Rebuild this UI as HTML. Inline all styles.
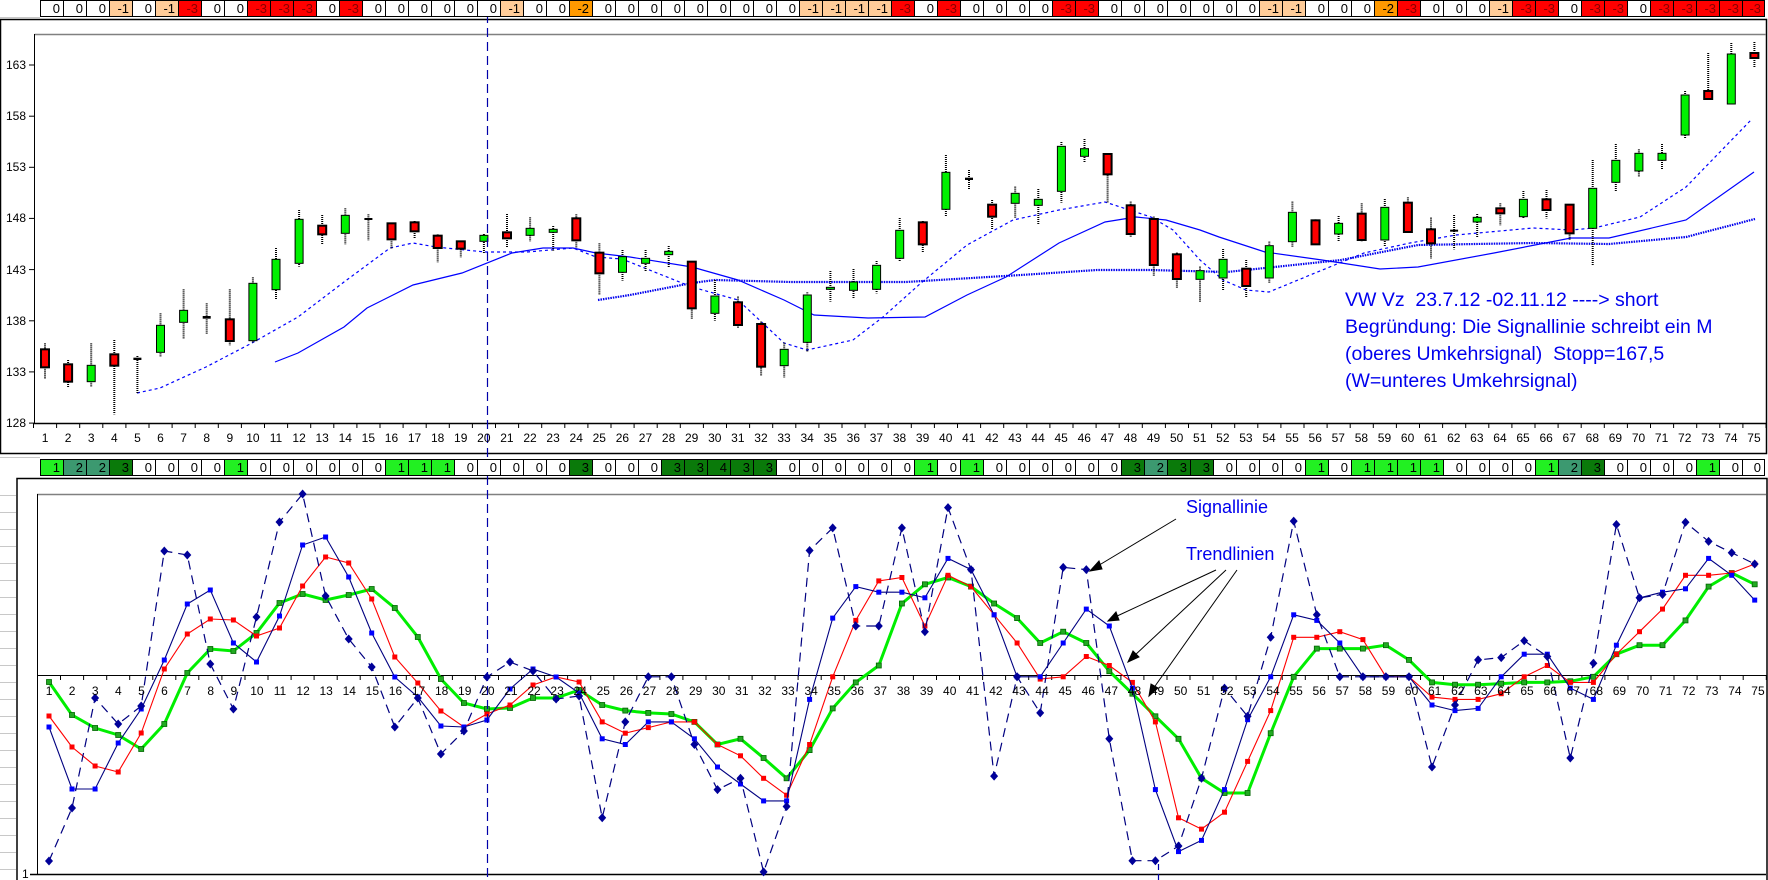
<!DOCTYPE html>
<html><head><meta charset="utf-8">
<style>
html,body{margin:0;padding:0;background:#fff;}
#wrap{position:relative;width:1768px;height:880px;overflow:hidden;background:#fff;font-family:"Liberation Sans",Arial,sans-serif;}
svg{position:absolute;left:0;top:0;}
.strip{position:absolute;left:40px;display:flex;height:17px;border-top:1px solid #000;border-bottom:1px solid #000;box-sizing:border-box;}
.strip i{font-style:normal;display:block;width:23px;height:100%;box-sizing:border-box;border-left:1px solid #000;font-size:13px;line-height:15px;text-align:right;padding-right:3px;color:#000;}
.strip i:last-child{border-right:1px solid #000;}
.a{background:#fff}.b{background:#FFCC99}.c{background:#FF9900}.d{background:#FF0000;color:#8a0000!important}
.e{background:#22F022}.f{background:#3C9970}.g{background:#0A7A0A}.h{background:#0A7A0A}
.lab{position:absolute;display:flex;font-size:12px;color:#000;}
.lab span{display:block;width:23.1px;text-align:center;}
.yl{position:absolute;font-size:12px;width:26px;text-align:right;left:0;}
.ann{position:absolute;color:#0000EE;font-size:19.5px;white-space:pre;line-height:27px;}
</style></head><body>
<div id="wrap">
<svg id="sv" width="1768" height="880" viewBox="0 0 1768 880" xmlns="http://www.w3.org/2000/svg">
<!-- spreadsheet grid bits -->
<g stroke="#c8c8c8" stroke-width="1">
<line x1="0" y1="17.5" x2="40" y2="17.5"/>
<line x1="0" y1="457.5" x2="40" y2="457.5"/>
<line x1="0" y1="495.5" x2="16" y2="495.5"/><line x1="0" y1="512.5" x2="16" y2="512.5"/><line x1="0" y1="529.5" x2="16" y2="529.5"/><line x1="0" y1="546.5" x2="16" y2="546.5"/><line x1="0" y1="563.5" x2="16" y2="563.5"/><line x1="0" y1="580.5" x2="16" y2="580.5"/><line x1="0" y1="597.5" x2="16" y2="597.5"/><line x1="0" y1="614.5" x2="16" y2="614.5"/><line x1="0" y1="631.5" x2="16" y2="631.5"/><line x1="0" y1="648.5" x2="16" y2="648.5"/><line x1="0" y1="665.5" x2="16" y2="665.5"/><line x1="0" y1="682.5" x2="16" y2="682.5"/><line x1="0" y1="699.5" x2="16" y2="699.5"/><line x1="0" y1="716.5" x2="16" y2="716.5"/><line x1="0" y1="733.5" x2="16" y2="733.5"/><line x1="0" y1="750.5" x2="16" y2="750.5"/><line x1="0" y1="767.5" x2="16" y2="767.5"/><line x1="0" y1="784.5" x2="16" y2="784.5"/><line x1="0" y1="801.5" x2="16" y2="801.5"/><line x1="0" y1="818.5" x2="16" y2="818.5"/><line x1="0" y1="835.5" x2="16" y2="835.5"/><line x1="0" y1="852.5" x2="16" y2="852.5"/><line x1="0" y1="869.5" x2="16" y2="869.5"/>
</g>
<!-- upper panel frame -->
<rect x="0.5" y="19.5" width="1766" height="434" fill="#fff" stroke="#000" stroke-width="1.5"/>
<line x1="34.5" y1="34.5" x2="1766" y2="34.5" stroke="#808080" stroke-width="1.5"/>
<line x1="34.5" y1="34" x2="34.5" y2="423" stroke="#000"/>
<line x1="34" y1="423.5" x2="1766" y2="423.5" stroke="#000" stroke-width="1.5"/>
<!-- lower panel frame -->
<rect x="17" y="478.5" width="1750" height="420" fill="#fff" stroke="#000" stroke-width="1.5"/>
<line x1="37" y1="494.5" x2="1766" y2="494.5" stroke="#808080" stroke-width="1.5"/>
<line x1="37.5" y1="494" x2="37.5" y2="874" stroke="#000"/>
<line x1="30" y1="874.5" x2="1766" y2="874.5" stroke="#000" stroke-width="1.5"/>
<line x1="37" y1="675.5" x2="1766" y2="675.5" stroke="#000" stroke-width="1"/>
<g id="gen"></g>
<!-- vertical dashed marker -->
<line x1="487.5" y1="0" x2="487.5" y2="880" stroke="#0000AA" stroke-width="1.2" stroke-dasharray="9,5"/>
<line x1="1158.5" y1="864" x2="1158.5" y2="880" stroke="#0000AA" stroke-width="1.2" stroke-dasharray="6,4"/>
<!-- annotation arrows -->
<g stroke="#000" stroke-width="1" fill="#000">
<line x1="1176" y1="519" x2="1096" y2="567"/><polygon points="1090,571 1099,561 1102,569"/>
<line x1="1216" y1="570" x2="1115" y2="617"/><polygon points="1108,621 1116,612 1119,620"/>
<line x1="1226" y1="570" x2="1134" y2="656"/><polygon points="1128,662 1133,651 1139,657"/>
<line x1="1237" y1="570" x2="1153" y2="689"/><polygon points="1149,696 1151,684 1158,688"/>
</g>
</svg>

<!-- top strip -->
<div class="strip" style="top:0">
<i class="a">0</i><i class="a">0</i><i class="a">0</i><i class="b">-1</i><i class="a">0</i><i class="b">-1</i><i class="d">-3</i><i class="a">0</i><i class="a">0</i><i class="d">-3</i><i class="d">-3</i><i class="d">-3</i><i class="a">0</i><i class="d">-3</i><i class="a">0</i><i class="a">0</i><i class="a">0</i><i class="a">0</i><i class="a">0</i><i class="a">0</i><i class="b">-1</i><i class="a">0</i><i class="a">0</i><i class="c">-2</i><i class="a">0</i><i class="a">0</i><i class="a">0</i><i class="a">0</i><i class="a">0</i><i class="a">0</i><i class="a">0</i><i class="a">0</i><i class="a">0</i><i class="b">-1</i><i class="b">-1</i><i class="b">-1</i><i class="b">-1</i><i class="d">-3</i><i class="a">0</i><i class="d">-3</i><i class="a">0</i><i class="a">0</i><i class="a">0</i><i class="a">0</i><i class="d">-3</i><i class="d">-3</i><i class="a">0</i><i class="a">0</i><i class="a">0</i><i class="a">0</i><i class="a">0</i><i class="a">0</i><i class="a">0</i><i class="b">-1</i><i class="b">-1</i><i class="a">0</i><i class="a">0</i><i class="a">0</i><i class="c">-2</i><i class="d">-3</i><i class="a">0</i><i class="a">0</i><i class="a">0</i><i class="b">-1</i><i class="d">-3</i><i class="d">-3</i><i class="a">0</i><i class="d">-3</i><i class="d">-3</i><i class="a">0</i><i class="d">-3</i><i class="d">-3</i><i class="d">-3</i><i class="d">-3</i><i class="d">-3</i>
</div>

<!-- lower strip -->
<div class="strip" style="top:459px">
<i class="e">1</i><i class="f">2</i><i class="f">2</i><i class="g">3</i><i class="a">0</i><i class="a">0</i><i class="a">0</i><i class="a">0</i><i class="e">1</i><i class="a">0</i><i class="a">0</i><i class="a">0</i><i class="a">0</i><i class="a">0</i><i class="a">0</i><i class="e">1</i><i class="e">1</i><i class="e">1</i><i class="a">0</i><i class="a">0</i><i class="a">0</i><i class="a">0</i><i class="a">0</i><i class="g">3</i><i class="a">0</i><i class="a">0</i><i class="a">0</i><i class="g">3</i><i class="g">3</i><i class="h">4</i><i class="g">3</i><i class="g">3</i><i class="a">0</i><i class="a">0</i><i class="a">0</i><i class="a">0</i><i class="a">0</i><i class="a">0</i><i class="e">1</i><i class="a">0</i><i class="e">1</i><i class="a">0</i><i class="a">0</i><i class="a">0</i><i class="a">0</i><i class="a">0</i><i class="a">0</i><i class="g">3</i><i class="f">2</i><i class="g">3</i><i class="g">3</i><i class="a">0</i><i class="a">0</i><i class="a">0</i><i class="a">0</i><i class="e">1</i><i class="a">0</i><i class="e">1</i><i class="e">1</i><i class="e">1</i><i class="e">1</i><i class="a">0</i><i class="a">0</i><i class="a">0</i><i class="a">0</i><i class="e">1</i><i class="f">2</i><i class="g">3</i><i class="a">0</i><i class="a">0</i><i class="a">0</i><i class="a">0</i><i class="e">1</i><i class="a">0</i><i class="a">0</i>
</div>

<!-- upper y labels -->
<div class="yl" style="top:58px">163</div>
<div class="yl" style="top:109px">158</div>
<div class="yl" style="top:160px">153</div>
<div class="yl" style="top:211px">148</div>
<div class="yl" style="top:263px">143</div>
<div class="yl" style="top:314px">138</div>
<div class="yl" style="top:365px">133</div>
<div class="yl" style="top:416px">128</div>
<div class="yl" style="top:867px;width:30px;text-align:left;left:22px">1</div>

<!-- upper x labels -->
<div class="lab" style="left:33.5px;top:431px">
<span>1</span><span>2</span><span>3</span><span>4</span><span>5</span><span>6</span><span>7</span><span>8</span><span>9</span><span>10</span><span>11</span><span>12</span><span>13</span><span>14</span><span>15</span><span>16</span><span>17</span><span>18</span><span>19</span><span>20</span><span>21</span><span>22</span><span>23</span><span>24</span><span>25</span><span>26</span><span>27</span><span>28</span><span>29</span><span>30</span><span>31</span><span>32</span><span>33</span><span>34</span><span>35</span><span>36</span><span>37</span><span>38</span><span>39</span><span>40</span><span>41</span><span>42</span><span>43</span><span>44</span><span>45</span><span>46</span><span>47</span><span>48</span><span>49</span><span>50</span><span>51</span><span>52</span><span>53</span><span>54</span><span>55</span><span>56</span><span>57</span><span>58</span><span>59</span><span>60</span><span>61</span><span>62</span><span>63</span><span>64</span><span>65</span><span>66</span><span>67</span><span>68</span><span>69</span><span>70</span><span>71</span><span>72</span><span>73</span><span>74</span><span>75</span>
</div>
<!-- lower x labels -->
<div class="lab" style="left:37.5px;top:684px">
<span>1</span><span>2</span><span>3</span><span>4</span><span>5</span><span>6</span><span>7</span><span>8</span><span>9</span><span>10</span><span>11</span><span>12</span><span>13</span><span>14</span><span>15</span><span>16</span><span>17</span><span>18</span><span>19</span><span>20</span><span>21</span><span>22</span><span>23</span><span>24</span><span>25</span><span>26</span><span>27</span><span>28</span><span>29</span><span>30</span><span>31</span><span>32</span><span>33</span><span>34</span><span>35</span><span>36</span><span>37</span><span>38</span><span>39</span><span>40</span><span>41</span><span>42</span><span>43</span><span>44</span><span>45</span><span>46</span><span>47</span><span>48</span><span>49</span><span>50</span><span>51</span><span>52</span><span>53</span><span>54</span><span>55</span><span>56</span><span>57</span><span>58</span><span>59</span><span>60</span><span>61</span><span>62</span><span>63</span><span>64</span><span>65</span><span>66</span><span>67</span><span>68</span><span>69</span><span>70</span><span>71</span><span>72</span><span>73</span><span>74</span><span>75</span>
</div>

<div class="ann" style="left:1345px;top:287px">VW Vz  23.7.12 -02.11.12 ----&gt; short
Begründung: Die Signallinie schreibt ein M
(oberes Umkehrsignal)  Stopp=167,5
(W=unteres Umkehrsignal)</div>
<div class="ann" style="left:1186px;top:494px;font-size:18px">Signallinie</div>
<div class="ann" style="left:1186px;top:541px;font-size:18px">Trendlinien</div>
</div>

<script>
(function(){
var s='';
function X(i){return 45+23.1*(i-1);}
function LX(i){return 49+23.05*(i-1);}
// ticks upper
for(var i=0;i<=75;i++){var x=(33.5+23.1*i).toFixed(1);s+='<line x1="'+x+'" y1="423" x2="'+x+'" y2="428" stroke="#000"/>';}
for(var k=0;k<8;k++){var y=(65+k*51.15).toFixed(1);s+='<line x1="29" y1="'+y+'" x2="35" y2="'+y+'" stroke="#000"/>';}
for(var i=0;i<=75;i++){var x=(37.5+23.05*i).toFixed(1);s+='<line x1="'+x+'" y1="675" x2="'+x+'" y2="680" stroke="#000"/>';}
var g1=[[688,742,670,775,'r'],[733,785,720,802,'r'],[736,785,670,802,'g'],[703,737,660,883,'r'],[713,720,708,822,'k'],[616,697,580,710,'g'],[571,607,508,657,'g'],[588,596,550,642,'k'],[598,663,508,677,'r'],[490,662,472,668,'g'],[418,509,384,538,'g'],[298,430,270,440,'g'],[317,343,285,372,'r'],[286,340,265,374,'g'],[294,300,283,362,'k'],[310,358,310,387,'r'],[307,334,303,356,'r'],[347,384,343,428,'r'],[364,386,364,413,'r'],[346,364,342,400,'g'],[337,355,282,383,'r'],[325,346,292,365,'g'],[328,337,318,392,'g'],[295,361,283,383,'r'],[398,460,370,524,'r'],[410,457,390,482,'g'],
[415,430,390,455,'g'],[394,404,378,442,'g'],[425,565,425,598,'r'],[528,580,480,602,'g'],[547,615,530,625,'r'],[612,740,605,768,'r'],[688,737,668,772,'g'],[525,667,517,697,'g'],[502,508,453,545,'g'],[486,511,447,535,'g'],[436,508,423,520,'g'],[331,415,294,425,'g'],[307,373,303,398,'r'],[157,268,105,288,'g'],[173,180,150,210,'k'],[254,290,240,330,'r'],[220,250,200,293,'g'],[238,256,207,312,'g'],[79,214,66,248,'g'],[86,109,57,128,'g'],[102,163,100,248,'r'],[256,342,245,352,'r'],
[297,435,290,470,'r'],[403,477,398,505,'r'],[452,478,440,545,'g'],[418,474,387,512,'g'],[446,498,420,532,'r'],[377,474,365,490,'g'],[277,365,245,380,'g'],[301,373,298,376,'r'],[310,342,288,365,'g'],[281,360,250,365,'r'],[262,360,237,380,'g'],[248,336,232,340,'r'],[328,370,293,415,'r'],[329,331,285,388,'k'],[292,306,282,353,'g'],[265,280,250,317,'r'],[238,290,213,297,'g'],[238,270,210,295,'r'],[254,340,254,360,'r'],[205,325,120,437,'g'],[121,187,72,215,'g'],[100,153,88,170,'g'],[100,121,72,150,'g']];
var c=[];
for(var i=0;i<g1.length;i++){var d=g1[i];c.push([120+d[0]/3,120+d[1]/3,120+d[2]/3,120+d[3]/3,d[4]]);}
c.push([95,135,91,138,'g'],[91,99,53,100,'r'],[54,104,43,105,'g'],[53,58,42,68,'r']);
var ma1=[[137,393],[160,388],[206,367],[252,343],[298,317],[344,282],[390,248],[413,243],[436,247],[485,252],[527,252],[573,248],[596,257],[622,259],[692,287],[738,300],[784,343],[807,350],[853,340],[883,317],[921,283],[967,245],[1013,220],[1059,210],[1105,202],[1151,217],[1173,230],[1200,260],[1223,280],[1246,290],[1269,292],[1315,273],[1364,253],[1410,243],[1456,235],[1533,228],[1571,230],[1594,228],[1640,217],[1686,187],[1751,120]];
var ma2=[[275,362],[298,353],[344,327],[367,308],[413,285],[462,273],[512,253],[543,248],[573,248],[596,253],[630,257],[692,267],[738,280],[784,300],[814,315],[868,318],[925,317],[967,295],[1006,277],[1059,243],[1105,222],[1136,217],[1166,220],[1200,230],[1219,237],[1265,252],[1322,260],[1380,269],[1418,267],[1494,253],[1571,238],[1609,238],[1686,220],[1754,172]];
var ma3=[[598,300],[630,295],[692,283],[715,280],[791,282],[906,282],[1021,275],[1097,270],[1150,270],[1227,272],[1341,260],[1418,245],[1533,243],[1609,244],[1686,237],[1755,219]];
function pl(a){return a.map(function(p){return p[0]+','+p[1];}).join(' ');}
s+='<polyline points="'+pl(ma1)+'" fill="none" stroke="#0000FF" stroke-width="1.2" stroke-dasharray="3,3"/>';
s+='<polyline points="'+pl(ma2)+'" fill="none" stroke="#0000FF" stroke-width="1.2"/>';
s+='<polyline points="'+pl(ma3)+'" fill="none" stroke="#0000EE" stroke-width="2.2" stroke-dasharray="1.5,1"/>';
for(var i=0;i<c.length;i++){var d=c[i],x=X(i+1);
 s+='<line x1="'+x.toFixed(1)+'" y1="'+d[2]+'" x2="'+x.toFixed(1)+'" y2="'+d[3]+'" stroke="#000" stroke-width="2" stroke-dasharray="1,1"/>';
 var h=Math.max(d[1]-d[0],2);
 if(d[4]=='r')s+='<rect x="'+(x-4).toFixed(1)+'" y="'+d[0]+'" width="8" height="'+h+'" fill="#FF0000" stroke="#000" stroke-width="2"/>';
 else if(d[4]=='g')s+='<rect x="'+(x-4).toFixed(1)+'" y="'+d[0]+'" width="8" height="'+h+'" fill="#00F000" stroke="#000" stroke-width="1"/>';
 else s+='<rect x="'+(x-4).toFixed(1)+'" y="'+d[0]+'" width="8" height="'+h+'" fill="#000"/>';
}
// lower series
var A=[861,808,698,724,706,551,555,664,709,617,522,494,596,639,667,727,698,754,731,677,662,671,699,696];
var Ap=[725,640,600,600,660,700,690,773,715,488,468,555,555,468,560,450,505,688,600,632,503,505,655,763,763,750,690,610,635,565,462,545,600,600,600,600,680,625,585,583,568,582,672,588,465,530,527,463,480,490,500];
var B=[727,789,789,743,709,660,604,590,643,662,616,545,537,577,633,677,697,726,727,720,689,669,677,693];
var Bp=[655,660,640,640,655,680,695,710,710,620,548,520,525,525,530,495,505,545,600,600,570,540,555,610,700,755,745,700,638,600,545,550,570,600,600,600,625,630,628,600,580,580,610,620,572,530,525,522,495,510,532];
var C=[716,747,766,772,733,669,634,619,620,636,628,586,557,563,599,657,683,711,727,714,705,685,677,682];
var Cp=[640,650,645,640,640,660,670,690,705,660,600,550,515,512,555,510,520,545,570,602,600,582,590,605,640,725,735,720,675,630,565,565,560,567,600,600,618,620,620,615,600,590,605,605,580,560,540,510,510,508,500];
var D=[682,715,728,735,749,724,673,649,651,633,603,594,600,595,589,608,637,679,703,709,708,698,698,690];
var Dp=[625,630,632,633,640,660,655,672,690,665,628,605,590,535,518,512,520,535,548,570,560,570,595,615,635,655,690,703,703,650,600,575,575,575,572,585,605,607,607,606,605,605,604,600,580,572,572,550,520,508,518];
function full(a,p){return a.concat(p.map(function(v){return v*1.128;}));}
function pts(a){var r=[];for(var i=0;i<a.length;i++)r.push([LX(i+1).toFixed(1),a[i].toFixed(1)]);return r;}
var sD=pts(full(D,Dp)),sC=pts(full(C,Cp)),sB=pts(full(B,Bp)),sA=pts(full(A,Ap));
s+='<polyline points="'+pl(sD)+'" fill="none" stroke="#00EE00" stroke-width="3"/>';
sD.forEach(function(p){s+='<rect x="'+(p[0]-2.5)+'" y="'+(p[1]-2.5)+'" width="5" height="5" fill="#22AA22" stroke="#006600" stroke-width="0.8"/>';});
s+='<polyline points="'+pl(sC)+'" fill="none" stroke="#FF0000" stroke-width="1.1"/>';
sC.forEach(function(p){s+='<rect x="'+(p[0]-2.5)+'" y="'+(p[1]-2.5)+'" width="5" height="5" fill="#FF0000"/>';});
s+='<polyline points="'+pl(sB)+'" fill="none" stroke="#000080" stroke-width="1.1"/>';
sB.forEach(function(p){s+='<rect x="'+(p[0]-2.5)+'" y="'+(p[1]-2.5)+'" width="5" height="5" fill="#0000FF"/>';});
s+='<polyline points="'+pl(sA)+'" fill="none" stroke="#000080" stroke-width="1.2" stroke-dasharray="9,6"/>';
sA.forEach(function(p){var x=+p[0],y=+p[1];s+='<polygon points="'+x+','+(y-4.5)+' '+(x+4)+','+y+' '+x+','+(y+4.5)+' '+(x-4)+','+y+'" fill="#000099"/>';});
document.getElementById('gen').innerHTML=s;
})();
</script>
</body></html>
